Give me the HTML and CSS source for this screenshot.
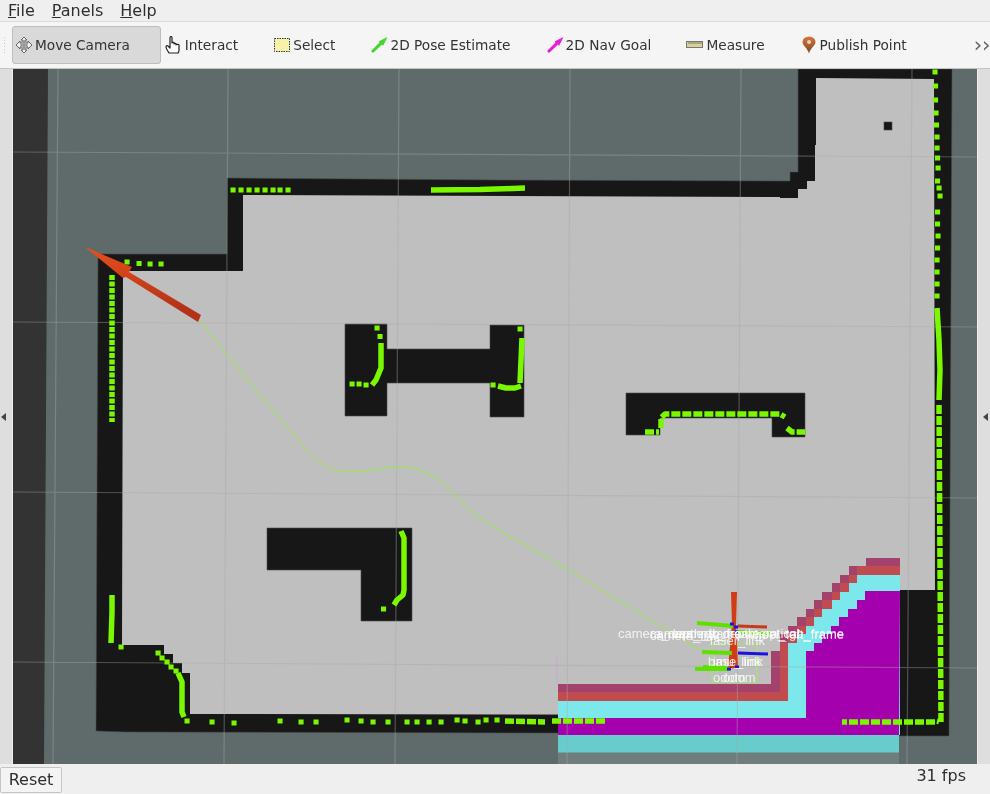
FILE: index.html
```html
<!DOCTYPE html>
<html lang="en">
<head>
  <meta charset="UTF-8" />
  <title>RViz</title>
  <link rel="stylesheet" href="styles.css">
</head>
<body>
  <div class="menubar">
    <span class="menu"><u>F</u>ile</span>
    <span class="menu"><u>P</u>anels</span>
    <span class="menu"><u>H</u>elp</span>
  </div>

  <div class="toolbar">
    <div class="grip"></div>
    <div class="tool active">
      <svg class="icon" viewBox="0 0 18 18">
        <path class="ico-move" d="M9 1l3 3h-2v3h3v-2l4 4-4 4v-2h-3v3h2l-3 3-3-3h2v-3H5v2L1 9l4-4v2h3V4H6z"/>
        <path class="ico-move-in" d="M6 6h6v6H6zM6 9h6M9 6v6"/>
      </svg>
      <span>Move Camera</span>
    </div>
    <div class="tool">
      <svg class="icon" viewBox="0 0 18 18">
        <path class="ico-hand" d="M4 17c-1-2-3-4-3-6 0-1 1-2 2-1l2 2V2c0-2 2-2 2 0v5c0-1 2-1 2 0v1c0-1 2-1 2 0v1c0-1 3-1 3 0v5c0 1 0 2-1 3z"/>
      </svg>
      <span>Interact</span>
    </div>
    <div class="tool">
      <svg class="icon" viewBox="0 0 18 18">
        <rect class="ico-select" x="1.500" y="2.500" width="15" height="13"/>
      </svg>
      <span>Select</span>
    </div>
    <div class="tool">
      <svg class="icon" viewBox="0 0 18 18">
        <path class="ico-pose" d="M1 15L9.500 6.500L8.500 5.500L17.500 1L13 10L12 8.500L3 17z"/>
      </svg>
      <span>2D Pose Estimate</span>
    </div>
    <div class="tool">
      <svg class="icon" viewBox="0 0 18 18">
        <path class="ico-goal" d="M1 15L9.500 6.500L8.500 5.500L17.500 1L13 10L12 8.500L3 17z"/>
      </svg>
      <span>2D Nav Goal</span>
    </div>
    <div class="tool">
      <svg class="icon" viewBox="0 0 18 18">
        <rect class="ico-ruler" x="0.500" y="5.500" width="16" height="6"/>
        <path class="ico-ticks" d="M3 6v2M5 6v2M7 6v2M9 6v2M11 6v2M13 6v2M15 6v2"/>
      </svg>
      <span>Measure</span>
    </div>
    <div class="tool">
      <svg class="icon" viewBox="0 0 18 18">
        <defs>
          <linearGradient id="pinFill" x1="0" y1="0" x2="0" y2="1">
            <stop offset="0" stop-color="#d8763a"/>
            <stop offset="1" stop-color="#7a4a22"/>
          </linearGradient>
        </defs>
        <path class="ico-pin" d="M9 17.500C7.500 12 2.500 9.500 2.500 6a6.500 5.500 0 0 1 13 0C15.500 9.500 10.500 12 9 17.500z"/>
        <circle class="ico-pin-dot" cx="9" cy="6" r="2"/>
      </svg>
      <span>Publish Point</span>
    </div>
    <div class="sep"></div>
    <div class="more">››</div>
  </div>

  <div class="main">
    <div class="handle"><i class="arrow-left"></i></div>

    <!-- coordinates below are window pixels, hence the viewBox offset -->
    <svg class="view" viewBox="13 69 964 695">
      <defs>
        <linearGradient id="arrowFill" x1="0" y1="0" x2="0.35" y2="1">
          <stop offset="0" stop-color="#e8501c"/>
          <stop offset="1" stop-color="#b43218"/>
        </linearGradient>
      </defs>

      <rect class="ground" x="13" y="69" width="964" height="695"/>
      <path class="band" d="M13 69H48L44 764H13z"/>

      <!-- walls -->
      <path class="wall" d="M98 254H227V178L500 180L780 181H790V172H798V69H952L949 736H899V733L558 733L126 732L96 731z"/>
      <!-- free space -->
      <path class="free" d="M123 271H243V195L780 197V198H798V189H807V181H815V145H816V78L934 79L935 590H899V715L190 714V673H182V663H173V654H164V645H122z"/>
      <!-- obstacles -->
      <path class="wall" d="M345 324H387V349H490V325H524V417H490V383H387V416H345z"/>
      <path class="wall" d="M626 393H805V437H772V418H660V435H626z"/>
      <path class="wall" d="M267 528H412V621H361V570H267z"/>
      <rect class="wall" x="884" y="122" width="8" height="8"/>

      <!-- local costmap -->
      <rect class="cost-shade" x="558" y="752" width="341" height="12"/>
      <rect class="cost-teal" x="558" y="735" width="341" height="17.500"/>
      <path class="cost-maroon" d="M900 558H866V566H849V575H840V583H832V592H822V600H814V609H806V617H797V626H788V634H780V651H771V684H558V735H900z"/>
      <path class="cost-red" d="M900 566H857V575H849V583H840V592H832V600H822V609H814V617H806V626H797V634H788V643H780V692H558V735H900z"/>
      <path class="cost-cyan" d="M900 575H857V583H849V592H840V600H832V609H822V617H814V626H806V634H797V643H788V701H558V735H900z"/>
      <path class="cost-purple" d="M900 591H865V600H857V609H848V617H839V626H831V634H822V643H814V651H806V718H558V735H899z"/>
      <path class="cost-edge" d="M557 655V684"/>

      <!-- grid -->
      <path class="grid" d="M58 69L53 764M228 69L224 764M399 69L395 764M570 69L567 764M741 69L737 764M912 69L907 764M13 152L977 157M13 322L977 327M13 492L977 498M13 662L977 668"/>

      <!-- laser scan -->
      <path class="dots" d="M127 262h.1M139 263.500h.1M150 264h.1M161 264h.1
        M233 190h.1M241 190h.1M249 190h.1M257 190h.1M265 190h.1M273 190h.1M280 190h.1M288 190h.1
        M377 328h.1M380 336.500h.1M352 384h.1M359 384h.1M366 385h.1M520 329h.1M493 385h.1
        M383.500 609h.1M121 647h.1M158 653h.1M162 658h.1M167 662h.1M171 667h.1M176 671h.1M187 721h.1
        M212 722h.1M234 723h.1M280 721h.1M301 722h.1M316 722h.1M347 720h.1M361 721h.1M373 722h.1M388 722h.1M407 722h.1M417 722h.1M429 722h.1M441 722h.1M457 720h.1M465 721h.1M478 722h.1M486 720h.1M497 720h.1
        M935 72h.1M935.500 86h.1M935.500 100h.1M936 113h.1M936.500 125h.1M937 137h.1M937 148h.1M937.500 158h.1M938 168h.1M937.500 181h.1M939 188h.1M940 196h.1M937.500 212h.1M937.500 224h.1M938 236h.1M937.500 248h.1M937 260h.1M937 272h.1M937 284h.1M937 296h.1"/>
      <path class="scan" d="M381 343L381 368L376 380L372 385"/>
      <path class="scan" d="M522 338L520 383M498 386L506 388L515 388L521 386"/>
      <path class="scan" d="M401 531L404 538L404 590L403 595L397 600L394 605"/>
      <path class="scan" d="M112 595L112 612L111 643"/>
      <path class="scan" d="M178 673L182 682L182 712L184 717"/>
      <path class="scan" d="M431 190L480 189.500L525 188"/>
      <path class="scan beads" d="M112 275V422"/>
      <path class="scan" d="M937 308L939 340L940 370L939 400"/>
      <path class="scan dash" d="M645 432H659M661 428V418L665 414H780L785 417M787 428L792 432H805"/>
      <path class="scan dash" d="M505 721L545 722M552 721H605"/>
      <path class="scan dash" d="M939 405L940 560L941 722L937 721M935 722L842 722"/>

      <!-- plan -->
      <path class="plan" d="M199 320C225 352 262 398 290 430C305 448 318 465 335 470C355 476 380 466 405 467C430 469 445 483 462 502C480 522 500 530 560 565C600 588 650 620 700 650"/>

      <!-- goal arrow -->
      <path class="goal-arrow" d="M85 247L132 267L129 272L201 315L198 322L126 277L123 278z"/>

      <!-- tf frames -->
      <rect class="tf-box" x="712" y="644" width="45" height="38"/>
      <path class="tf-red" d="M731 592H737L736 625L738 668H728L732 625z"/>
      <path class="tf-redline" d="M738 626L767 627M730 660L734 668"/>
      <path class="tf-green" d="M697 623L733 626M737 632L770 634M702 652L732 653M695 669L730 669M703 667L727 667"/>
      <path class="tf-blue" d="M738 653L768 654M730 624H734M734 627H738M734 632H738M727 669H731M735 667H739"/>
      <g class="tf-labels">
        <text x="618" y="638">camera_depth_frame</text>
        <text x="650" y="640">camera_link</text>
        <text x="650" y="638">camera_rgb_frame</text>
        <text x="672" y="638">camera_depth_optical</text>
        <text x="745" y="639">wheel_left_frame</text>
        <text x="844" y="638" text-anchor="end">camera_rgb_frame</text>
        <text x="710" y="645">laser_link</text>
        <text x="708" y="666">base_link</text>
        <text x="713" y="666">imu_link</text>
        <text x="713" y="682">odom</text>
        <text x="723" y="682">odom</text>
      </g>
    </svg>

    <div class="handle right"><i class="arrow-right"></i></div>
  </div>

  <div class="statusbar">
    <div class="reset">Reset</div>
    <div class="fps">31 fps</div>
  </div>
</body>
</html>
```

FILE: styles.css
```css
html, body {
  margin: 0;
  height: 100%;
  overflow: hidden;
}

body {
  width: 990px;
  height: 794px;
  background-color: #efefef;
  color: #2e2e2e;
  font-family: "DejaVu Sans", sans-serif;
  display: flex;
  flex-direction: column;
  filter: blur(0.35px);
}

.menubar {
  height: 21px;
  display: flex;
  gap: 17px;
  padding-left: 8px;
  align-items: center;
  border-bottom: 1px solid #dcdcdc;
  font-size: 16px;
}

.toolbar {
  height: 46px;
  display: flex;
  align-items: center;
  padding-left: 12px;
  position: relative;
  background-color: #f5f5f5;
  border-bottom: 1px solid #c4c4c4;
  font-size: 13.7px;
  color: #333;
}

.grip {
  position: absolute;
  left: 3px;
  top: 14px;
  width: 4px;
  height: 18px;
  background-image: radial-gradient(#c9c9c9 1px, transparent 1px);
  background-size: 3px 3px;
}

.tool {
  height: 38px;
  box-sizing: border-box;
  display: flex;
  align-items: center;
  gap: 2px;
  padding: 0 31px 0 4px;
  white-space: nowrap;
}

.tool.active {
  padding-left: 2px;
  background-color: #d9d9d9;
  border: 1px solid #bdbdbd;
  border-radius: 3px;
  padding-right: 30px;
}

.icon {
  width: 18px;
  height: 18px;
  flex: none;
}

.sep {
  width: 1px;
  height: 27px;
  margin-left: 4px;
  background-color: #dadada;
}

.more {
  margin-left: 32px;
  font-size: 21px;
  line-height: 21px;
  color: #666;
}

.main {
  height: 695px;
  display: flex;
}

.handle {
  width: 13px;
  box-sizing: border-box;
  padding-left: 1px;
  background-color: #dedede;
  border-right: 1px solid #efefef;
  display: flex;
  align-items: center;
}

.handle.right {
  padding-left: 5px;
  border-right: 0;
  border-left: 1px solid #efefef;
}

.arrow-left,
.arrow-right {
  border: 4px solid transparent;
  border-right: 5px solid #444;
  border-left: 0;
}

.view {
  width: 964px;
  height: 695px;
  display: block;
}

.statusbar {
  height: 30px;
  display: flex;
  align-items: flex-start;
  justify-content: space-between;
  padding-right: 24px;
  font-size: 16px;
}

.reset {
  width: 62px;
  height: 26px;
  margin-top: 3px;
  box-sizing: border-box;
  line-height: 24px;
  text-align: center;
  background-color: #f4f4f4;
  border: 1px solid #c6c6c6;
  border-radius: 2px;
}

.fps {
  margin-top: 2px;
}

/* map */
.ground { fill: #5f6b6b; }
.band { fill: #333333; }
.wall { fill: #171717; stroke: #4a4a4a; stroke-width: .6; }
.free { fill: #bfbfbf; }
.cost-shade { fill: #6f7d7d; }
.cost-teal { fill: #68cccc; }
.cost-maroon { fill: #a4426e; }
.cost-red { fill: #c04c50; }
.cost-cyan { fill: #7de8ec; }
.cost-purple { fill: #a500ae; }
.cost-edge { fill: none; stroke: #c8a8c8; stroke-width: 1; }
.grid { fill: none; stroke: #a8a8a8; stroke-width: 1.2; opacity: .4; }

.dots, .scan { fill: none; stroke: #7af800; stroke-width: 5; stroke-linecap: square; }
.scan { stroke-width: 5.500; stroke-linecap: butt; stroke-linejoin: round; }
.scan.dash { stroke-dasharray: 9 2; }
.scan.beads { stroke-dasharray: 5 1.500; }

.plan { fill: none; stroke: #9be84a; stroke-width: 1; }
.goal-arrow { fill: url(#arrowFill); }

.tf-box { fill: none; stroke: #9cf05a; stroke-width: 1; }
.tf-red { fill: #d13c14; }
.tf-redline { fill: none; stroke: #c8391b; stroke-width: 3; }
.tf-green { fill: none; stroke: #5ee000; stroke-width: 4; }
.tf-blue { fill: none; stroke: #1a12e0; stroke-width: 3; }
.tf-labels text {
  fill: #ffffff;
  fill-opacity: .8;
  font-family: "Liberation Sans", sans-serif;
  font-size: 13px;
}

/* toolbar icons */
.ico-move { fill: #efefef; stroke: #666; stroke-width: 1; stroke-linejoin: round; }
.ico-move-in { fill: #bbb; stroke: #777; stroke-width: .7; }
.ico-hand { fill: #fff; stroke: #222; stroke-width: 1.200; stroke-linejoin: round; }
.ico-select { fill: #f6f2a6; stroke: #333; stroke-width: 1; stroke-dasharray: 1.500 1; }
.ico-pose { fill: #45d62c; }
.ico-goal { fill: #e81cd8; }
.ico-ruler { fill: #d8d29a; stroke: #777; stroke-width: 1; }
.ico-ticks { fill: none; stroke: #666; stroke-width: .8; }
.ico-pin { fill: url(#pinFill); }
.ico-pin-dot { fill: #ecd0b0; }
```
